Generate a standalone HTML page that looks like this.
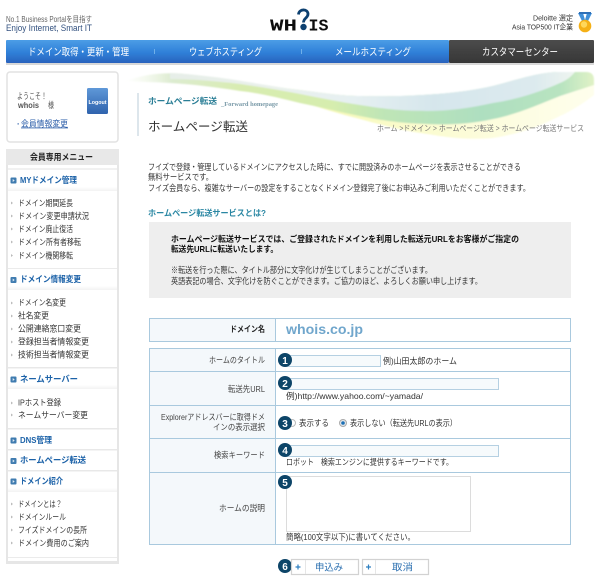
<!DOCTYPE html>
<html lang="ja"><head><meta charset="utf-8"><title>ホームページ転送</title>
<style>
html,body{margin:0;padding:0;background:#fff;width:600px;height:580px;overflow:hidden}
svg{display:block}
text{font-family:"Liberation Sans","Noto Sans CJK JP",sans-serif;font-size:8.3px;fill:#333;white-space:pre}
.b{font-weight:bold}
.m{font-weight:bold;fill:#1c62a8;font-size:8.6px}
.n{fill:#fff;font-size:10px}
.c{fill:#fff;font-weight:bold;font-size:10px;text-anchor:middle}
</style></head><body>
<svg width="600" height="580" viewBox="0 0 600 580" xmlns="http://www.w3.org/2000/svg">
<defs>
<linearGradient id="nav" x1="0" y1="0" x2="0" y2="1"><stop offset="0" stop-color="#4c9de6"/><stop offset=".55" stop-color="#2f80d8"/><stop offset="1" stop-color="#2a62bd"/></linearGradient>
<linearGradient id="dark" x1="0" y1="0" x2="0" y2="1"><stop offset="0" stop-color="#4c4c4c"/><stop offset="1" stop-color="#363636"/></linearGradient>
<linearGradient id="lg" x1="0" y1="0" x2="0" y2="1"><stop offset="0" stop-color="#5f98d8"/><stop offset="1" stop-color="#2f63ad"/></linearGradient>
<linearGradient id="green" x1="125" y1="0" x2="594" y2="0" gradientUnits="userSpaceOnUse"><stop offset="0" stop-color="#eef6e2" stop-opacity="0"/><stop offset=".1" stop-color="#dcebd0"/><stop offset=".25" stop-color="#d8ecb0"/><stop offset=".44" stop-color="#d6edae"/><stop offset=".55" stop-color="#bfe5b6"/><stop offset=".76" stop-color="#aedfc0"/><stop offset=".93" stop-color="#b8e3c0"/><stop offset="1" stop-color="#e0f2c6"/></linearGradient>
<linearGradient id="blue" x1="170" y1="0" x2="575" y2="0" gradientUnits="userSpaceOnUse"><stop offset="0" stop-color="#e6eee8"/><stop offset=".25" stop-color="#eaf1ec"/><stop offset=".45" stop-color="#e6f0f2"/><stop offset=".65" stop-color="#d6e6ec"/><stop offset=".9" stop-color="#dceaee"/><stop offset="1" stop-color="#eef5f0"/></linearGradient>
<linearGradient id="yel" x1="300" y1="0" x2="594" y2="0" gradientUnits="userSpaceOnUse"><stop offset="0" stop-color="#f2f6b0"/><stop offset=".3" stop-color="#fafbc8"/><stop offset=".7" stop-color="#fdfde0"/><stop offset="1" stop-color="#fefeec"/></linearGradient>
<linearGradient id="sec" x1="0" y1="0" x2="0" y2="1"><stop offset="0" stop-color="#fff"/><stop offset=".8" stop-color="#fff"/><stop offset="1" stop-color="#f3f3f3"/></linearGradient>
<filter id="soft" x="-2%" y="-2%" width="104%" height="104%"><feGaussianBlur stdDeviation="0.28"/></filter>
<filter id="sw" x="-5%" y="-20%" width="110%" height="140%"><feGaussianBlur stdDeviation="0.8"/></filter>
</defs>

<!-- swoosh -->
<g filter="url(#sw)">
<path d="M300,101 C320,108 340,114 360,119 C385,126 405,131 427,134 C450,138 470,140 493,138 C520,134 540,126 560,116 C575,109 585,102 594,95 L594,85 L560,96 L427,120 L360,112Z" fill="url(#yel)"/>
<path d="M125,81 C145,74 165,72 185,74 C225,78 265,86 300,90 C330,94 345,96 360,96 C400,97 455,95 493,86 C520,79 540,72 560,72 L586,72 Q594,72 594,80 L594,85 C585,88 575,91 560,96 C540,104 515,115 493,119 C470,124 450,125 427,124 C400,123 385,121 360,116 C340,112 320,107 300,103 C280,98 260,93 240,91 C215,87 190,84 170,83 C155,82 140,82 125,81Z" fill="url(#green)"/>
<path d="M170,73 C225,76 265,86 300,90 C330,94 345,96 360,96 C400,97 455,95 493,86 C520,79 540,72 560,72 L575,72 C570,78 565,81 560,83 C540,92 515,100 493,103 C470,108 450,111 427,111 C400,111 385,109 360,105 C340,102 320,98 300,94 C280,90 260,87 240,84 C215,81 190,79 170,79Z" fill="url(#blue)"/>
</g>

<g filter="url(#soft)">
<!-- header -->
<text x="6" y="22" textLength="86" lengthAdjust="spacingAndGlyphs" style="font-size:8px;fill:#666">No.1 Business Portalを目指す</text>
<text x="6" y="31" textLength="86" lengthAdjust="spacingAndGlyphs" style="font-size:9px;fill:#33517f">Enjoy Internet, Smart IT</text>
<text x="270" y="30.5" textLength="27" lengthAdjust="spacingAndGlyphs" style="font-family:'Liberation Mono',monospace;font-size:17px;font-weight:bold;fill:#111">WH</text>
<text x="308.500" y="30.5" textLength="20" lengthAdjust="spacingAndGlyphs" style="font-family:'Liberation Mono',monospace;font-size:17px;font-weight:bold;fill:#111">IS</text>
<path d="M298.500,14.500 C299,8.500 308,8.500 308,14 C308,18 303.500,18 303.500,22.500" fill="none" stroke="#0d3f70" stroke-width="2.8"/>
<circle cx="303.500" cy="27" r="3.2" fill="#0d3f70"/>
<text x="533" y="20.5" textLength="40" lengthAdjust="spacingAndGlyphs" style="font-size:7.5px;fill:#333">Deloitte 選定</text>
<text x="512" y="29.5" textLength="61" lengthAdjust="spacingAndGlyphs" style="font-size:7.5px;fill:#333">Asia TOP500 IT企業</text>
<path d="M578,13 L583,13 L585,20 L582,21Z M592,13 L587,13 L585,20 L588,21Z" fill="#3f8fd8"/>
<path d="M579,13 H591" stroke="#2f6fb8" stroke-width="2"/>
<circle cx="585" cy="26" r="6.3" fill="#f5b015"/>
<circle cx="584" cy="24.5" r="3.2" fill="#ffd75a"/>

<!-- nav -->
<rect x="6" y="63" width="588" height="2" fill="#d8d8d8"/>
<rect x="6" y="40" width="443" height="23" fill="url(#nav)" rx="1"/>
<rect x="449" y="40" width="145" height="23" fill="url(#dark)" rx="1"/>
<rect x="154" y="49" width="1" height="5" fill="#6fb0ea"/>
<rect x="301" y="49" width="1" height="5" fill="#6fb0ea"/>
<text class="n" x="28" y="55.5" textLength="101" lengthAdjust="spacingAndGlyphs">ドメイン取得・更新・管理</text>
<text class="n" x="189" y="55.5" textLength="73" lengthAdjust="spacingAndGlyphs">ウェブホスティング</text>
<text class="n" x="335" y="55.5" textLength="76" lengthAdjust="spacingAndGlyphs">メールホスティング</text>
<text class="n" x="482" y="55.5" textLength="76" lengthAdjust="spacingAndGlyphs">カスタマーセンター</text>

<!-- login box -->
<rect x="7" y="72" width="111" height="70" rx="3" fill="#fff" stroke="#e2e2e2" stroke-width="1.5"/>
<text x="17" y="99" textLength="30" lengthAdjust="spacingAndGlyphs" style="fill:#555">ようこそ！</text>
<text x="18" y="108" textLength="21" lengthAdjust="spacingAndGlyphs" class="b" style="fill:#555">whois</text>
<text x="48" y="108" textLength="6" lengthAdjust="spacingAndGlyphs" style="fill:#555">様</text>
<rect x="87" y="88" width="21" height="26" rx="1.5" fill="url(#lg)"/>
<text x="97.5" y="104" text-anchor="middle" textLength="18" lengthAdjust="spacingAndGlyphs" class="b" style="font-size:5.5px;fill:#fff">Logout</text>
<text x="17" y="126.5" style="fill:#2a5ca8;font-weight:bold">·</text>
<text x="21" y="126.5" textLength="47" lengthAdjust="spacingAndGlyphs" style="fill:#2a5ca8;text-decoration:underline">会員情報変更</text>

<!-- side menu -->
<rect x="6" y="149" width="113" height="415" fill="#e6e6e6"/>
<rect x="8" y="149" width="109" height="412" fill="#fff"/>
<rect x="6" y="149" width="113" height="16" fill="#e8e8e8"/>
<rect x="8" y="168" width="109" height="2" fill="#f1f1f1"/>
<rect x="8" y="170" width="109" height="21" fill="url(#sec)"/>
<rect x="8" y="268" width="109" height="1" fill="#ebebeb"/>
<rect x="8" y="270" width="109" height="20" fill="url(#sec)"/>
<rect x="8" y="367" width="109" height="1.5" fill="#e8e8e8"/>
<rect x="8" y="369" width="109" height="20" fill="url(#sec)"/>
<rect x="8" y="428" width="109" height="1.5" fill="#e8e8e8"/>
<rect x="8" y="449" width="109" height="1.5" fill="#e8e8e8"/>
<rect x="8" y="470" width="109" height="1.5" fill="#e8e8e8"/>
<rect x="8" y="472" width="109" height="20" fill="url(#sec)"/>
<rect x="8" y="557" width="109" height="1" fill="#ebebeb"/>
<text class="b" x="30" y="160" textLength="63" lengthAdjust="spacingAndGlyphs" style="font-size:8.6px;fill:#222">会員専用メニュー</text>
<g fill="#3f7cb0">
<rect x="10.5" y="177.5" width="6" height="6" rx="1"/><rect x="10.5" y="277" width="6" height="6" rx="1"/><rect x="10.5" y="376.5" width="6" height="6" rx="1"/><rect x="10.5" y="437.5" width="6" height="6" rx="1"/><rect x="10.5" y="458" width="6" height="6" rx="1"/><rect x="10.5" y="478.5" width="6" height="6" rx="1"/>
</g>
<g fill="#dfeaf3">
<path d="M12.7,179 l2,1.5 -2,1.5z"/><path d="M12.7,278.5 l2,1.5 -2,1.5z"/><path d="M12.7,378 l2,1.5 -2,1.5z"/><path d="M12.7,439 l2,1.5 -2,1.5z"/><path d="M12.7,459.5 l2,1.5 -2,1.5z"/><path d="M12.7,480 l2,1.5 -2,1.5z"/>
</g>
<text class="m" x="20" y="183" textLength="57" lengthAdjust="spacingAndGlyphs">MYドメイン管理</text>
<text class="m" x="20" y="282" textLength="61" lengthAdjust="spacingAndGlyphs">ドメイン情報変更</text>
<text class="m" x="20" y="382" textLength="58" lengthAdjust="spacingAndGlyphs">ネームサーバー</text>
<text class="m" x="20" y="443" textLength="32" lengthAdjust="spacingAndGlyphs">DNS管理</text>
<text class="m" x="20" y="463" textLength="66" lengthAdjust="spacingAndGlyphs">ホームページ転送</text>
<text class="m" x="20" y="484" textLength="43" lengthAdjust="spacingAndGlyphs">ドメイン紹介</text>
<g fill="#bbb">
<path d="M11,201.500 l2,1.500 -2,1.500z"/><path d="M11,214.500 l2,1.500 -2,1.500z"/><path d="M11,227.500 l2,1.500 -2,1.500z"/><path d="M11,240.500 l2,1.500 -2,1.500z"/><path d="M11,254 l2,1.500 -2,1.500z"/>
<path d="M11,301.500 l2,1.500 -2,1.500z"/><path d="M11,314.500 l2,1.500 -2,1.500z"/><path d="M11,327.500 l2,1.500 -2,1.500z"/><path d="M11,340.500 l2,1.500 -2,1.500z"/><path d="M11,353.500 l2,1.500 -2,1.500z"/>
<path d="M11,401.500 l2,1.500 -2,1.500z"/><path d="M11,413.500 l2,1.500 -2,1.500z"/>
<path d="M11,502.500 l2,1.500 -2,1.500z"/><path d="M11,515.500 l2,1.500 -2,1.500z"/><path d="M11,528.500 l2,1.500 -2,1.500z"/><path d="M11,541.500 l2,1.500 -2,1.500z"/>
</g>
<text x="18" y="206" textLength="55" lengthAdjust="spacingAndGlyphs">ドメイン期間延長</text>
<text x="18" y="219" textLength="71" lengthAdjust="spacingAndGlyphs">ドメイン変更申請状況</text>
<text x="18" y="232" textLength="55" lengthAdjust="spacingAndGlyphs">ドメイン廃止復活</text>
<text x="18" y="245" textLength="63" lengthAdjust="spacingAndGlyphs">ドメイン所有者移転</text>
<text x="18" y="258.500" textLength="55" lengthAdjust="spacingAndGlyphs">ドメイン機関移転</text>
<text x="18" y="305.500" textLength="48" lengthAdjust="spacingAndGlyphs">ドメイン名変更</text>
<text x="18" y="318.500" textLength="31" lengthAdjust="spacingAndGlyphs">社名変更</text>
<text x="18" y="331.500" textLength="63" lengthAdjust="spacingAndGlyphs">公開連絡窓口変更</text>
<text x="18" y="344.500" textLength="71" lengthAdjust="spacingAndGlyphs">登録担当者情報変更</text>
<text x="18" y="357.500" textLength="71" lengthAdjust="spacingAndGlyphs">技術担当者情報変更</text>
<text x="18" y="405.500" textLength="43" lengthAdjust="spacingAndGlyphs">IPホスト登録</text>
<text x="18" y="418" textLength="70" lengthAdjust="spacingAndGlyphs">ネームサーバー変更</text>
<text x="18" y="507" textLength="44" lengthAdjust="spacingAndGlyphs">ドメインとは？</text>
<text x="18" y="520" textLength="48" lengthAdjust="spacingAndGlyphs">ドメインルール</text>
<text x="18" y="533" textLength="69" lengthAdjust="spacingAndGlyphs">フイズドメインの長所</text>
<text x="18" y="546" textLength="71" lengthAdjust="spacingAndGlyphs">ドメイン費用のご案内</text>

<!-- title -->
<rect x="137" y="93" width="2" height="43" fill="#dde6ec"/>
<text x="148" y="104" textLength="69" lengthAdjust="spacingAndGlyphs" class="b" style="font-size:8.6px;fill:#2a7e96">ホームページ転送</text>
<text x="221" y="106" textLength="57" lengthAdjust="spacingAndGlyphs" style="font-family:'Liberation Serif',serif;font-size:6.5px;font-weight:bold;fill:#7a9aa8">_Forward homepage</text>
<text x="148" y="131" textLength="100" lengthAdjust="spacingAndGlyphs" style="font-size:12.500px;fill:#333">ホームページ転送</text>
<text x="377" y="131" textLength="207" lengthAdjust="spacingAndGlyphs" style="font-size:8px;fill:#777">ホーム &gt;ドメイン &gt; ホームページ転送 &gt; ホームページ転送サービス</text>

<!-- intro -->
<text x="148" y="170" textLength="373" lengthAdjust="spacingAndGlyphs">フイズで登録・管理しているドメインにアクセスした時に、すでに開設済みのホームページを表示させることができる</text>
<text x="148" y="180" textLength="65" lengthAdjust="spacingAndGlyphs">無料サービスです。</text>
<text x="148" y="191" textLength="382" lengthAdjust="spacingAndGlyphs">フイズ会員なら、複雑なサーバーの設定をすることなくドメイン登録完了後にお申込みご利用いただくことができます。</text>
<text x="148" y="216" textLength="118" lengthAdjust="spacingAndGlyphs" class="b" style="fill:#2a87a3">ホームページ転送サービスとは?</text>

<rect x="149" y="222" width="422" height="76" fill="#eeeeee"/>
<text x="171" y="242" textLength="348" lengthAdjust="spacingAndGlyphs" class="b" style="fill:#111">ホームページ転送サービスでは、ご登録されたドメインを利用した転送元URLをお客様がご指定の</text>
<text x="171" y="252" textLength="107" lengthAdjust="spacingAndGlyphs" class="b" style="fill:#111">転送先URLに転送いたします。</text>
<text x="171" y="273" textLength="261" lengthAdjust="spacingAndGlyphs">※転送を行った際に、タイトル部分に文字化けが生じてしまうことがございます。</text>
<text x="171" y="284" textLength="311" lengthAdjust="spacingAndGlyphs">英語表記の場合、文字化けを防ぐことができます。ご協力のほど、よろしくお願い申し上げます。</text>

<!-- table 1 -->
<rect x="149.500" y="318.500" width="421" height="23" fill="#fff" stroke="#a9c9de"/>
<rect x="149.500" y="318.500" width="126" height="23" fill="#f4f8fb" stroke="#a9c9de"/>
<text class="b" x="230" y="332" textLength="35" lengthAdjust="spacingAndGlyphs" style="fill:#222">ドメイン名</text>
<text x="286" y="334" textLength="77" lengthAdjust="spacingAndGlyphs" class="b" style="font-size:13.500px;fill:#6fa6cc">whois.co.jp</text>

<!-- table 2 -->
<rect x="149.500" y="348.500" width="421" height="196" fill="#fff" stroke="#a9c9de"/>
<rect x="149.500" y="348.500" width="126" height="196" fill="#f4f8fb" stroke="#a9c9de"/>
<g stroke="#a9c9de"><path d="M150,371.500H571M150,405.500H571M150,438.500H571M150,472.500H571"/></g>
<text x="209" y="363" textLength="56" lengthAdjust="spacingAndGlyphs" style="fill:#444">ホームのタイトル</text>
<text x="228" y="392" textLength="37" lengthAdjust="spacingAndGlyphs" style="fill:#444">転送先URL</text>
<text x="161" y="420" textLength="104" lengthAdjust="spacingAndGlyphs" style="fill:#444">Explorerアドレスバーに取得ドメ</text>
<text x="213" y="430" textLength="52" lengthAdjust="spacingAndGlyphs" style="fill:#444">インの表示選択</text>
<text x="214" y="458" textLength="51" lengthAdjust="spacingAndGlyphs" style="fill:#444">検索キーワード</text>
<text x="219" y="511" textLength="46" lengthAdjust="spacingAndGlyphs" style="fill:#444">ホームの説明</text>

<!-- inputs -->
<rect x="285.500" y="355.500" width="95" height="11" fill="#f6fafc" stroke="#b5d0e2"/>
<rect x="285.500" y="378.500" width="213" height="11" fill="#f6fafc" stroke="#b5d0e2"/>
<rect x="285.500" y="445.500" width="213" height="11" fill="#f6fafc" stroke="#b5d0e2"/>
<rect x="286.500" y="476.500" width="184" height="55" fill="#fff" stroke="#dcdcdc"/>
<text x="383" y="364" textLength="74" lengthAdjust="spacingAndGlyphs">例)山田太郎のホーム</text>
<text x="286" y="399" textLength="137" lengthAdjust="spacingAndGlyphs">例)http://www.yahoo.com/~yamada/</text>
<circle cx="292" cy="423" r="3.5" fill="#fff" stroke="#bbb"/>
<text x="299" y="426" textLength="30" lengthAdjust="spacingAndGlyphs">表示する</text>
<circle cx="343" cy="423" r="3.5" fill="#e4e8ec" stroke="#aaa"/>
<circle cx="343" cy="423" r="1.8" fill="#1f6fb5"/>
<text x="350" y="426" textLength="107" lengthAdjust="spacingAndGlyphs">表示しない（転送先URLの表示）</text>
<text x="286" y="465" textLength="167" lengthAdjust="spacingAndGlyphs">ロボット　検索エンジンに提供するキーワードです。</text>
<text x="286" y="540" textLength="129" lengthAdjust="spacingAndGlyphs">簡略(100文字以下)に書いてください。</text>

<!-- number badges -->
<g fill="#0f4468">
<circle cx="285" cy="360" r="7"/><circle cx="285" cy="383" r="7"/><circle cx="285" cy="423" r="7"/><circle cx="285" cy="450" r="7"/><circle cx="285" cy="482" r="7"/><circle cx="285" cy="566" r="7"/>
</g>
<text class="c" x="285" y="364">1</text><text class="c" x="285" y="387">2</text><text class="c" x="285" y="427">3</text><text class="c" x="285" y="454">4</text><text class="c" x="285" y="486">5</text><text class="c" x="285" y="570">6</text>

<!-- buttons -->
<rect x="291.500" y="559.500" width="67" height="15" fill="#fff" stroke="#d2d2d2" stroke-width="1.2"/>
<rect x="362.500" y="559.500" width="66" height="15" fill="#fff" stroke="#d2d2d2" stroke-width="1.2"/>
<path d="M305.500,560V574M375.500,560V574" stroke="#e6e6e6"/>
<path d="M295.500,567H300.500M298,564.500V569.500M366,567H371M368.500,564.500V569.500" stroke="#2f7fc0" stroke-width="1.2"/>
<text x="315" y="570.500" textLength="28" lengthAdjust="spacingAndGlyphs" style="font-size:9.500px;fill:#2c6fb0">申込み</text>
<text x="392" y="570.500" textLength="21" lengthAdjust="spacingAndGlyphs" style="font-size:9.500px;fill:#2c6fb0">取消</text>
</g>
</svg>
</body></html>
